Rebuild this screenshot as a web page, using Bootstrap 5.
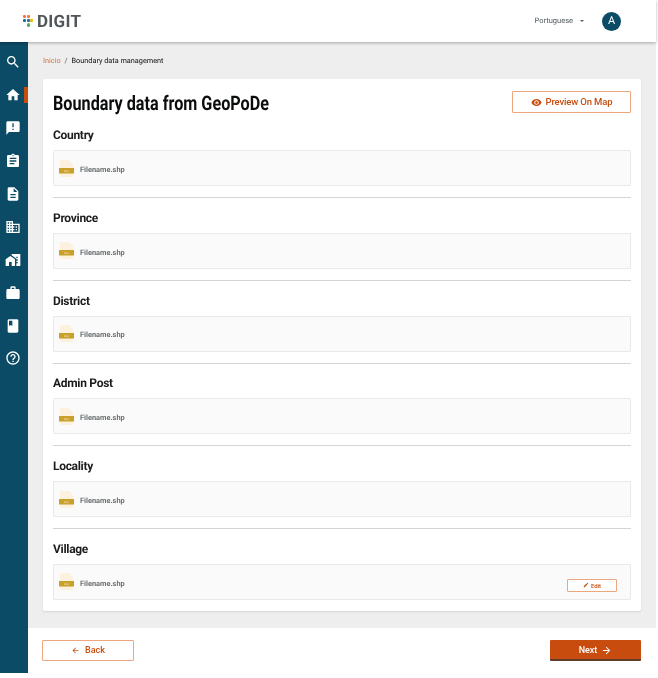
<!DOCTYPE html>
<html lang="en">
<head>
<meta charset="UTF-8">
<meta name="viewport" content="width=device-width, initial-scale=1.0">
<title>Boundary data from GeoPoDe</title>
<link href="https://cdn.jsdelivr.net/npm/bootstrap@5.3.0/dist/css/bootstrap.min.css" rel="stylesheet">
<style>
  body {
    font-family: Roboto, "Liberation Sans", sans-serif;
    background-color: #fff;
    color: #0b0c0c;
    text-rendering: geometricPrecision;
  }
  .app-shell { width: 656px; height: 673px; will-change: transform; }
  .top-bar {
    height: 42px;
    padding: 0 35px 0 23px;
    box-shadow: 0 1px 3px rgba(0, 0, 0, .3);
    z-index: 2;
  }
  .logo-dots { width: 10px; height: 14px; }
  .logo-text {
    font-size: 17px;
    font-weight: 700;
    letter-spacing: .3px;
    line-height: 1;
    margin-top: 2px;
    color: #50565a;
  }
  .lang-label { font-size: 7.5px; color: #505a5f; }
  .lang-caret {
    width: 0;
    height: 0;
    margin: 0 18px 0 7px;
    border-left: 2.5px solid transparent;
    border-right: 2.5px solid transparent;
    border-top: 2.5px solid #505a5f;
  }
  .user-avatar {
    width: 19px;
    height: 19px;
    font-size: 11px;
    background-color: #0b4b66;
  }
  .side-rail {
    width: 28px;
    padding-top: 4px;
    background-color: #0b4b66;
  }
  .rail-item { height: 32.9px; padding-right: 2px; }
  .rail-item svg { width: 16px; height: 16px; fill: #fff; }
  .rail-active-wrap { position: relative; }
  .rail-marker {
    position: absolute;
    top: 8px;
    right: 0;
    width: 4px;
    height: 16px;
    background-color: #c84c0e;
  }
  .main-area { background-color: #eee; }
  .crumb-row { padding: 13px 15px 0 15px; height: 37px; }
  .crumb-row .breadcrumb { font-size: 7.3px; line-height: 12px; margin: 0; --bs-breadcrumb-item-padding-x: 4px; --bs-breadcrumb-divider-color: #505a5f; }
  .crumb-row a { color: #d4743f; text-decoration: none; }
  .crumb-row .breadcrumb-item.active { color: #0b0c0c; }
  .sheet {
    margin: 0 15px;
    height: 532px;
    padding: 12px 10px 0 10px;
    border-radius: 2px;
    box-shadow: 0 1px 2px rgba(0, 0, 0, .1);
  }
  .sheet-title {
    font-size: 20px;
    font-weight: 700;
    line-height: 24px;
    margin: 0;
    white-space: nowrap;
    transform: scaleX(.81);
    transform-origin: left center;
  }
  .outline-btn {
    --bs-btn-border-radius: 1px;
    border: 1px solid #eda67d;
    color: #c84c0e;
    background-color: #fff;
    font-weight: 500;
  }
  .outline-btn:hover { color: #c84c0e; border-color: #eda67d; background-color: #fff; }
  .preview-btn { width: 119px; height: 22px; font-size: 9.5px; letter-spacing: -.15px; }
  .preview-btn svg { width: 11px; height: 11px; fill: #c84c0e; }
  .level-name {
    font-size: 12px;
    font-weight: 700;
    line-height: 16px;
    letter-spacing: -.3px;
    margin: 0 0 7px 0;
    color: #1c1c1c;
  }
  .first-level { margin-top: 12px; }
  .file-box {
    height: 36px;
    padding: 0 13px 0 5px;
    background-color: #fafafa;
    border: 1px solid #e9e9e9;
    border-radius: 1px;
  }
  .file-icon { width: 15px; height: 19px; margin-right: 6px; }
  .file-name { font-size: 7.4px; font-weight: 700; color: #6d7174; margin-top: 3px; }
  .level-rule { margin: 11px 0 11.75px 0; border-color: #d6d5d4; opacity: 1; }
  .edit-btn { width: 50px; height: 13px; margin-top: 7px; font-size: 6px; padding: 0; }
  .edit-btn svg { width: 6px; height: 6px; fill: #c84c0e; }
  .bottom-bar { height: 45px; margin-top: 17px; padding: 12px 15px 0 14px; }
  .back-btn { width: 92px; height: 21px; font-size: 9px; }
  .back-btn svg { width: 9px; height: 9px; fill: #c84c0e; }
  .next-btn {
    --bs-btn-border-radius: 1px;
    width: 91px;
    height: 21px;
    padding: 2px 0 0 0;
    font-size: 9px;
    font-weight: 500;
    color: #fff;
    background-color: #c84c0e;
    border: 0;
    border-bottom: 2px solid #5f3d2b;
  }
  .next-btn:hover { color: #fff; background-color: #c84c0e; border-color: #5f3d2b; }
  .next-btn svg { width: 11px; height: 11px; fill: #fff; }
  .band-text { font-size: 3px; fill: #f3e3b5; }
  .tight-gap { gap: 2px; }
  .back-gap { gap: 5px; }
</style>
</head>
<body>

<div class="app-shell d-flex flex-column">
  <!-- header -->
  <header class="top-bar bg-white d-flex align-items-center justify-content-between position-relative">
    <div class="d-flex align-items-center gap-1">
      <svg class="logo-dots" viewBox="0 0 10 14">
        <rect x="0" y="1" width="3" height="3" rx="1" fill="#f47738"/>
        <rect x="4" y="1" width="3" height="3" rx="1" fill="#f47738"/>
        <rect x="0" y="5" width="3" height="3" rx="1" fill="#1c6fa8"/>
        <rect x="4" y="5" width="3" height="3" rx="1" fill="#1c6fa8"/>
        <rect x="7" y="5" width="3" height="3" rx="1" fill="#f2b705"/>
        <rect x="4" y="9" width="3" height="4" rx="1.5" fill="#4caf50"/>
      </svg>
      <span class="logo-text">DIGIT</span>
    </div>
    <div class="d-flex align-items-center">
      <span class="lang-label">Portuguese</span>
      <span class="lang-caret"></span>
      <span class="user-avatar rounded-circle text-white d-flex align-items-center justify-content-center">A</span>
    </div>
  </header>

  <div class="d-flex flex-grow-1">
    <!-- sidebar -->
    <nav class="side-rail d-flex flex-column flex-shrink-0">
      <div class="rail-item d-flex align-items-center justify-content-center"><svg viewBox="0 0 24 24"><path d="M15.5 14h-.79l-.28-.27C15.41 12.59 16 11.11 16 9.5 16 5.91 13.09 3 9.5 3S3 5.91 3 9.5 5.91 16 9.5 16c1.61 0 3.09-.59 4.23-1.57l.27.28v.79l5 4.99L20.49 19l-4.99-5zm-6 0C7.01 14 5 11.99 5 9.5S7.01 5 9.5 5 14 7.01 14 9.5 11.99 14 9.5 14z"/></svg></div>
      <div class="rail-item rail-active-wrap d-flex align-items-center justify-content-center"><svg viewBox="0 0 24 24"><path d="M10 20v-6h4v6h5v-8h3L12 3 2 12h3v8z"/></svg><span class="rail-marker"></span></div>
      <div class="rail-item d-flex align-items-center justify-content-center"><svg viewBox="0 0 24 24"><path d="M20 2H4c-1.1 0-1.99.9-1.99 2L2 22l4-4h14c1.1 0 2-.9 2-2V4c0-1.1-.9-2-2-2zm-7 9h-2V5h2v6zm0 4h-2v-2h2v2z"/></svg></div>
      <div class="rail-item d-flex align-items-center justify-content-center"><svg viewBox="0 0 24 24"><path d="M19 3h-4.18C14.4 1.84 13.3 1 12 1c-1.3 0-2.4.84-2.82 2H5c-1.1 0-2 .9-2 2v14c0 1.1.9 2 2 2h14c1.1 0 2-.9 2-2V5c0-1.1-.9-2-2-2zm-7 0c.55 0 1 .45 1 1s-.45 1-1 1-1-.45-1-1 .45-1 1-1zm2 14H7v-2h7v2zm3-4H7v-2h10v2zm0-4H7V7h10v2z"/></svg></div>
      <div class="rail-item d-flex align-items-center justify-content-center"><svg viewBox="0 0 24 24"><path d="M14 2H6c-1.1 0-1.99.9-1.99 2L4 20c0 1.1.89 2 1.99 2H18c1.1 0 2-.9 2-2V8l-6-6zm2 16H8v-2h8v2zm0-4H8v-2h8v2zm-3-5V3.5L18.5 9H13z"/></svg></div>
      <div class="rail-item d-flex align-items-center justify-content-center"><svg viewBox="0 0 24 24"><path d="M12 7V3H2v18h20V7H12zM6 19H4v-2h2v2zm0-4H4v-2h2v2zm0-4H4V9h2v2zm0-4H4V5h2v2zm4 12H8v-2h2v2zm0-4H8v-2h2v2zm0-4H8V9h2v2zm0-4H8V5h2v2zm10 12h-8v-2h2v-2h-2v-2h2v-2h-2V9h8v10zm-2-8h-2v2h2v-2zm0 4h-2v2h2v-2z"/></svg></div>
      <div class="rail-item d-flex align-items-center justify-content-center"><svg viewBox="0 0 24 24"><path d="M1 11v10h5v-6h4v6h5V11L8 6z"/><path d="M10 3v1.97l7 5V11h2v2h-2v2h2v2h-2v4h6V3H10zm9 6h-2V7h2v2z"/></svg></div>
      <div class="rail-item d-flex align-items-center justify-content-center"><svg viewBox="0 0 24 24"><path d="M20 6h-4V4c0-1.11-.89-2-2-2h-4c-1.11 0-2 .89-2 2v2H4c-1.11 0-1.99.89-1.99 2L2 19c0 1.11.89 2 2 2h16c1.11 0 2-.89 2-2V8c0-1.11-.89-2-2-2zm-6 0h-4V4h4v2z"/></svg></div>
      <div class="rail-item d-flex align-items-center justify-content-center"><svg viewBox="0 0 24 24"><path d="M18 2H6c-1.1 0-2 .9-2 2v16c0 1.1.9 2 2 2h12c1.1 0 2-.9 2-2V4c0-1.1-.9-2-2-2zM6 4h5v8l-2.5-1.5L6 12V4z"/></svg></div>
      <div class="rail-item d-flex align-items-center justify-content-center"><svg viewBox="0 0 24 24"><path d="M11 18h2v-2h-2v2zm1-16C6.48 2 2 6.48 2 12s4.48 10 10 10 10-4.48 10-10S17.52 2 12 2zm0 18c-4.41 0-8-3.59-8-8s3.59-8 8-8 8 3.59 8 8-3.59 8-8 8zm0-14c-2.21 0-4 1.79-4 4h2c0-1.1.9-2 2-2s2 .9 2 2c0 2-3 1.75-3 5h2c0-2.25 3-2.5 3-5 0-2.21-1.79-4-4-4z"/></svg></div>
    </nav>

    <!-- content -->
    <div class="flex-grow-1 d-flex flex-column">
      <main class="main-area flex-grow-1">
        <div class="crumb-row">
          <ol class="breadcrumb">
            <li class="breadcrumb-item"><a href="#">Inicio</a></li>
            <li class="breadcrumb-item active">Boundary data management</li>
          </ol>
        </div>
        <section class="sheet bg-white">
          <div class="d-flex justify-content-between align-items-start">
            <h1 class="sheet-title">Boundary data from GeoPoDe</h1>
            <button class="btn outline-btn preview-btn d-flex align-items-center justify-content-center gap-1 p-0"><svg viewBox="0 0 24 24"><path d="M12 4.5C7 4.5 2.73 7.61 1 12c1.73 4.39 6 7.5 11 7.5s9.27-3.11 11-7.5c-1.73-4.39-6-7.5-11-7.5zM12 17c-2.76 0-5-2.24-5-5s2.24-5 5-5 5 2.24 5 5-2.24 5-5 5zm0-8c-1.66 0-3 1.34-3 3s1.34 3 3 3 3-1.34 3-3-1.34-3-3-3z"/></svg>Preview On Map</button>
          </div>

          <h2 class="level-name first-level">Country</h2>
          <div class="file-box d-flex align-items-center">
            <svg class="file-icon" viewBox="0 0 15 19"><path d="M1 1h9l4 4v13H1z" fill="#fbf1de"/><rect x="0" y="9" width="15" height="5.5" fill="#c9a02c"/><text class="band-text" x="5" y="13">shp</text></svg>
            <span class="file-name">Filename.shp</span>
          </div>
          <hr class="level-rule">

          <h2 class="level-name">Province</h2>
          <div class="file-box d-flex align-items-center">
            <svg class="file-icon" viewBox="0 0 15 19"><path d="M1 1h9l4 4v13H1z" fill="#fbf1de"/><rect x="0" y="9" width="15" height="5.5" fill="#c9a02c"/><text class="band-text" x="5" y="13">shp</text></svg>
            <span class="file-name">Filename.shp</span>
          </div>
          <hr class="level-rule">

          <h2 class="level-name">District</h2>
          <div class="file-box d-flex align-items-center">
            <svg class="file-icon" viewBox="0 0 15 19"><path d="M1 1h9l4 4v13H1z" fill="#fbf1de"/><rect x="0" y="9" width="15" height="5.5" fill="#c9a02c"/><text class="band-text" x="5" y="13">shp</text></svg>
            <span class="file-name">Filename.shp</span>
          </div>
          <hr class="level-rule">

          <h2 class="level-name">Admin Post</h2>
          <div class="file-box d-flex align-items-center">
            <svg class="file-icon" viewBox="0 0 15 19"><path d="M1 1h9l4 4v13H1z" fill="#fbf1de"/><rect x="0" y="9" width="15" height="5.5" fill="#c9a02c"/><text class="band-text" x="5" y="13">shp</text></svg>
            <span class="file-name">Filename.shp</span>
          </div>
          <hr class="level-rule">

          <h2 class="level-name">Locality</h2>
          <div class="file-box d-flex align-items-center">
            <svg class="file-icon" viewBox="0 0 15 19"><path d="M1 1h9l4 4v13H1z" fill="#fbf1de"/><rect x="0" y="9" width="15" height="5.5" fill="#c9a02c"/><text class="band-text" x="5" y="13">shp</text></svg>
            <span class="file-name">Filename.shp</span>
          </div>
          <hr class="level-rule">

          <h2 class="level-name">Village</h2>
          <div class="file-box d-flex align-items-center">
            <svg class="file-icon" viewBox="0 0 15 19"><path d="M1 1h9l4 4v13H1z" fill="#fbf1de"/><rect x="0" y="9" width="15" height="5.5" fill="#c9a02c"/><text class="band-text" x="5" y="13">shp</text></svg>
            <span class="file-name">Filename.shp</span>
            <button class="btn outline-btn edit-btn ms-auto d-flex align-items-center justify-content-center tight-gap"><svg viewBox="0 0 24 24"><path d="M3 17.25V21h3.75L17.81 9.94l-3.75-3.75L3 17.25zM20.71 7.04c.39-.39.39-1.02 0-1.41l-2.34-2.34c-.39-.39-1.02-.39-1.41 0l-1.83 1.83 3.75 3.75 1.83-1.83z"/></svg>Edit</button>
          </div>
        </section>
        <div class="bottom-bar bg-white d-flex justify-content-between">
          <button class="btn outline-btn back-btn d-flex align-items-center justify-content-center back-gap p-0"><svg viewBox="0 0 24 24"><path d="M20 11H7.83l5.59-5.59L12 4l-8 8 8 8 1.41-1.41L7.83 13H20v-2z"/></svg>Back</button>
          <button class="btn next-btn d-flex align-items-center justify-content-center gap-1">Next<svg viewBox="0 0 24 24"><path d="M12 4l-1.41 1.41L16.17 11H4v2h12.17l-5.58 5.59L12 20l8-8z"/></svg></button>
        </div>
      </main>
    </div>
  </div>
</div>

<script src="https://cdn.jsdelivr.net/npm/bootstrap@5.3.0/dist/js/bootstrap.bundle.min.js"></script>
</body>
</html>
